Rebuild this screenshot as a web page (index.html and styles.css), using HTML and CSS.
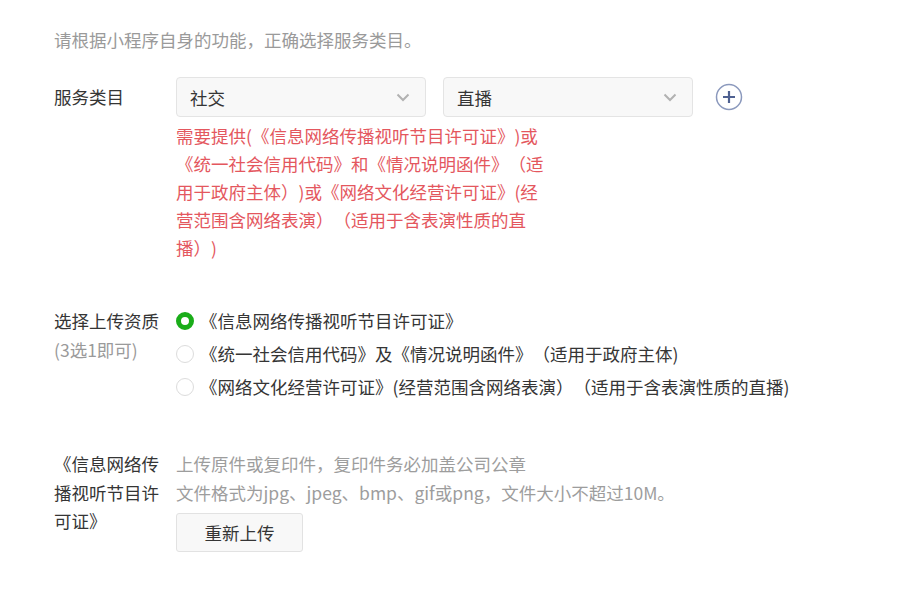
FILE: index.html
```html
<!DOCTYPE html>
<html lang="zh-CN">
<head>
<meta charset="utf-8">
<title>服务类目</title>
<link rel="stylesheet" href="styles.css">
</head>
<body>
<div class="page">
  <p class="intro">请根据小程序自身的功能，正确选择服务类目。</p>

  <div class="row row-category">
    <div class="label label-select">服务类目</div>
    <div class="field">
      <div class="selects">
        <div class="select">
          <span>社交</span>
          <svg class="chev" width="14" height="9" viewBox="0 0 14 9"><path d="M1.5 1.5 L7 7 L12.5 1.5" fill="none" stroke="#b2b2b2" stroke-width="2"/></svg>
        </div>
        <div class="select">
          <span>直播</span>
          <svg class="chev" width="14" height="9" viewBox="0 0 14 9"><path d="M1.5 1.5 L7 7 L12.5 1.5" fill="none" stroke="#b2b2b2" stroke-width="2"/></svg>
        </div>
        <svg class="add" width="28" height="28" viewBox="0 0 28 28"><circle cx="14" cy="14" r="12.5" fill="none" stroke="#8b99bd" stroke-width="1.5"/><path d="M14 8 V20 M8 14 H20" stroke="#4f6191" stroke-width="2.2" fill="none"/></svg>
      </div>
      <p class="tip">需要提供(《信息网络传播视听节目许可证》)或《统一社会信用代码》和《情况说明函件》（适用于政府主体）)或《网络文化经营许可证》(经营范围含网络表演）（适用于含表演性质的直播）)</p>
    </div>
  </div>

  <div class="row row-radio">
    <div class="label label-multi">选择上传资质<br><span class="sub">(3选1即可)</span></div>
    <ul class="radios">
      <li class="radio checked"><i class="dot"></i>《信息网络传播视听节目许可证》</li>
      <li class="radio"><i class="dot"></i>《统一社会信用代码》及《情况说明函件》（适用于政府主体)</li>
      <li class="radio"><i class="dot"></i>《网络文化经营许可证》(经营范围含网络表演）（适用于含表演性质的直播)</li>
    </ul>
  </div>

  <div class="row row-upload">
    <div class="label label-wrap">《信息网络传播视听节目许可证》</div>
    <div class="upload">
      <p class="hint">上传原件或复印件，复印件务必加盖公司公章</p>
      <p class="hint">文件格式为jpg、jpeg、bmp、gif或png，文件大小不超过10M。</p>
      <button class="btn">重新上传</button>
    </div>
  </div>
</div>
</body>
</html>
```

FILE: styles.css
```css
html, body {
  margin: 0;
  padding: 0;
  background: #fff;
}
body {
  font-family: "Noto Sans CJK SC", "Noto Sans", sans-serif;
  font-size: 17.5px;
  color: #353535;
  text-spacing-trim: space-all;
}
.page {
  padding: 26px 0 0 54px;
}
p { margin: 0; }
.intro {
  line-height: 28px;
  color: #9a9a9a;
}
.row {
  display: flex;
  align-items: flex-start;
}
.label {
  width: 110px;
  flex: none;
  margin-right: 12px;
  color: #353535;
}
.row-category { margin-top: 23px; }
.label-select { line-height: 40px; }
.selects {
  display: flex;
  align-items: center;
}
.select {
  box-sizing: border-box;
  width: 250px;
  height: 40px;
  border: 1px solid #e4e4e4;
  border-radius: 4px;
  background: #f8f8f8;
  display: flex;
  align-items: center;
  justify-content: space-between;
  padding: 0 15px 0 13px;
  margin-right: 17px;
}
.add { margin-left: 5px; }
.tip {
  margin-top: 5px;
  width: 372px;
  line-height: 28px;
  color: #e4575e;
}
.row-radio { margin-top: 42px; }
.label-multi {
  padding-top: 2px;
  line-height: 29px;
}
.sub { color: #9a9a9a; }
.radios {
  list-style: none;
  margin: 0;
  padding: 0;
}
.radio {
  display: flex;
  align-items: center;
  height: 33px;
}
.dot {
  box-sizing: border-box;
  width: 18px;
  height: 18px;
  border-radius: 50%;
  border: 1px solid #dcdcdc;
  background: #fff;
  margin-right: 6px;
  flex: none;
}
.radio.checked .dot {
  border: 5px solid #1aad19;
}
.row-upload { margin-top: 47px; }
.label-wrap { line-height: 28.5px; }
.hint {
  line-height: 28.5px;
  color: #9d9d9d;
}
.btn {
  margin-top: 6px;
  box-sizing: border-box;
  width: 127px;
  height: 39px;
  border: 1px solid #e2e2e2;
  border-radius: 3px;
  background: #f8f8f8;
  font-family: inherit;
  font-size: 17.5px;
  color: #353535;
  cursor: pointer;
}
```
